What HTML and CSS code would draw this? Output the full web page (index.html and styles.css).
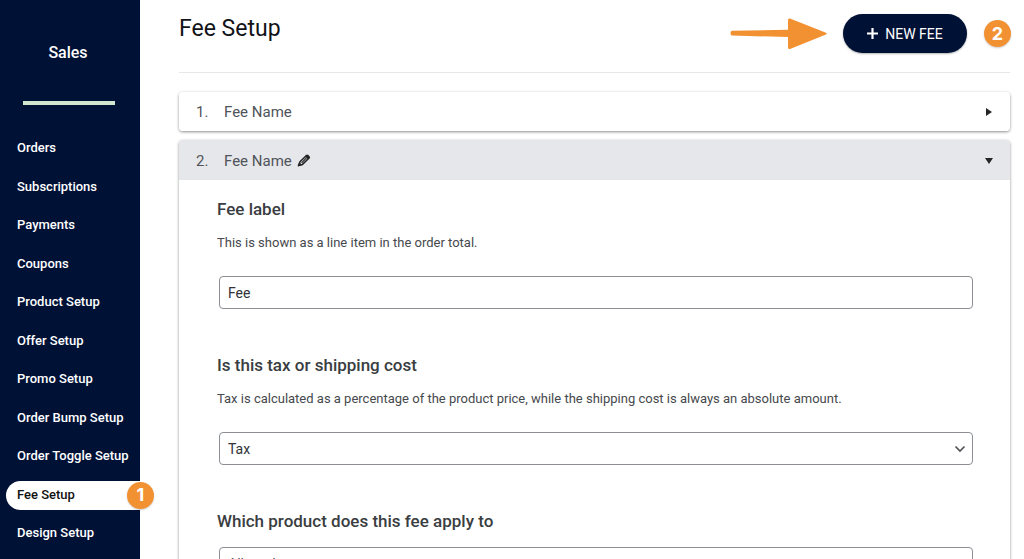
FILE: index.html
```html
<!DOCTYPE html>
<html lang="en">
<head>
<meta charset="utf-8">
<meta name="viewport" content="width=device-width, initial-scale=1">
<title>Fee Setup</title>
<link rel="stylesheet" href="styles.css">
</head>
<body>
<div class="app">
  <aside class="sidebar">
    <div class="sidebar-title">Sales</div>
    <div class="sidebar-rule"></div>
    <nav class="nav">
      <a href="#">Orders</a>
      <a href="#">Subscriptions</a>
      <a href="#">Payments</a>
      <a href="#">Coupons</a>
      <a href="#">Product Setup</a>
      <a href="#">Offer Setup</a>
      <a href="#">Promo Setup</a>
      <a href="#">Order Bump Setup</a>
      <a href="#">Order Toggle Setup</a>
      <a href="#" class="active" aria-current="page">Fee Setup<span class="badge badge-nav">1</span></a>
      <a href="#">Design Setup</a>
    </nav>
  </aside>
  <main class="main">
    <header class="header">
      <h1 class="title">Fee Setup</h1>
      <div class="actions">
        <svg class="arrow" width="98" height="34" viewBox="0 0 98 34" aria-hidden="true"><path d="M2 13.800 L58 12.800 L58 3 Q58 1 60 1.500 L96 15.800 Q97.500 16.600 96 17.400 L60 32 Q58 32.500 58 30.500 L58 20 L2 18.600 Q.5 18.300 .5 16.200 Q.5 14 2 13.800Z" fill="#f29132"/></svg>
        <button class="new-fee" type="button"><svg width="11" height="11" viewBox="0 0 11 11" aria-hidden="true"><path d="M5.500 0V11M0 5.500H11" stroke="#fff" stroke-width="2.200"/></svg>NEW FEE</button>
        <span class="badge">2</span>
      </div>
    </header>
    <section class="card">
      <button class="card-head" type="button" aria-expanded="false">
        <span class="num">1.</span><span>Fee Name</span>
        <svg class="caret" width="8" height="8" viewBox="0 0 8 8" aria-hidden="true"><path d="M1 0L7 4L1 8Z" fill="#262626"/></svg>
      </button>
    </section>
    <section class="card">
      <button class="card-head open" type="button" aria-expanded="true">
        <span class="num">2.</span><span>Fee Name</span>
        <svg class="pencil" width="14" height="14" viewBox="0 0 14 14" aria-hidden="true"><path d="M1.500 11.500L3 7.800L9.200 1.700Q10.100 .9 11 1.700L11.800 2.500Q12.600 3.400 11.800 4.300L5.500 10.400Z" fill="#e6e7ea" stroke="#262626" stroke-width="1.600" stroke-linejoin="round"/><path d="M8 2.500L9.800 .9L12.800 3.500L10.900 5.600ZM.8 12.500L2.300 8.200L5.200 11.100Z" fill="#262626"/><path d="M4.600 8.900L9.300 4.200" stroke="#262626" stroke-width="1.200"/></svg>
        <svg class="caret" width="8" height="8" viewBox="0 0 8 8" aria-hidden="true"><path d="M0 1H8L4 7Z" fill="#262626"/></svg>
      </button>
      <div class="card-body">
        <div class="field">
          <label for="fee-label">Fee label</label>
          <p class="hint">This is shown as a line item in the order total.</p>
          <input class="control" id="fee-label" type="text" value="Fee">
        </div>
        <div class="field">
          <label for="fee-type">Is this tax or shipping cost</label>
          <p class="hint">Tax is calculated as a percentage of the product price, while the shipping cost is always an absolute amount.</p>
          <div class="select">
            <select class="control" id="fee-type"><option>Tax</option><option>Shipping cost</option></select>
            <svg class="chevron" width="12" height="8" viewBox="0 0 12 8" aria-hidden="true"><path d="M1.500 1.500L6 6L10.500 1.500" fill="none" stroke="#505357" stroke-width="1.700"/></svg>
          </div>
        </div>
        <div class="field">
          <label for="fee-product">Which product does this fee apply to</label>
          <input class="control product" id="fee-product" type="text" placeholder="All products">
        </div>
      </div>
    </section>
  </main>
</div>
</body>
</html>
```
FILE: styles.css
```css
* { box-sizing: border-box; }
html { scrollbar-width: none; }
body {
  margin: 0;
  font: 13px/20px Roboto, "Liberation Sans", sans-serif;
  color: #3c4043;
  background: #fff;
}
.app { display: flex; min-height: 100vh; }

.sidebar {
  flex: 0 0 140px;
  padding: 43px 0 0 6px;
  background: #001136;
  color: #fff;
}
.sidebar-title {
  margin-right: 10px;
  text-align: center;
  font-size: 16px;
  font-weight: 500;
}
.sidebar-rule {
  height: 4px;
  margin: 38px 25px 29px 17px;
  background: #d3e7d0;
}
.nav {
  display: flex;
  flex-direction: column;
  justify-content: space-between;
  height: 414px;
}
.nav a {
  position: relative;
  padding: 4px 0 5px 11px;
  border-radius: 15px 0 0 15px;
  color: #fff;
  font-weight: 500;
  text-decoration: none;
  white-space: nowrap;
}
.nav .active { background: #fff; color: #111; }

.badge {
  display: flex;
  align-items: center;
  justify-content: center;
  width: 27px;
  height: 27px;
  border-radius: 50%;
  background: #f29132;
  box-shadow: 0 1px 2px rgba(0, 0, 0, .2);
  color: #fff;
  font-family: Inter, sans-serif;
  font-size: 18px;
  font-weight: 700;
}
.badge-nav { position: absolute; right: -14px; top: 1px; }

.main { flex: 1; min-width: 0; padding: 0 14px 24px 39px; }
.header {
  display: flex;
  align-items: flex-start;
  justify-content: space-between;
  height: 73px;
  margin-bottom: 19px;
  padding-top: 14px;
  border-bottom: 1px solid #e6e7e9;
}
.title {
  margin: 0;
  color: #111318;
  font-size: 23px;
  font-weight: 400;
  line-height: 30px;
}
.actions { display: flex; align-items: center; margin-right: -1px; }
.arrow { margin-right: 15px; }
.new-fee {
  display: flex;
  align-items: center;
  justify-content: center;
  gap: 7px;
  width: 124px;
  height: 39px;
  margin-right: 17px;
  border: 0;
  border-radius: 20px;
  background: #001136;
  box-shadow: 0 1px 2px rgba(0, 0, 0, .3);
  color: #fff;
  font: 400 14px/20px Roboto, sans-serif;
}

.card {
  margin-bottom: 9px;
  border-radius: 4px;
  background: #fff;
  box-shadow: 0 1px 3px rgba(0, 0, 0, .45);
}
.card-head {
  display: flex;
  align-items: center;
  width: 100%;
  height: 39px;
  padding: 1px 17px 0;
  border: 0;
  border-radius: 4px;
  background: #fff;
  color: #50545a;
  font: 400 15px/20px Roboto, sans-serif;
}
.card-head.open {
  height: 40px;
  border-radius: 4px 4px 0 0;
  background: #e6e7ea;
}
.num { width: 28px; text-align: left; }
.caret { margin-left: auto; }
.pencil { margin-left: 5px; }

.card-body { padding: 17px 37px 24px 38px; }
.field { margin-bottom: 44px; }
.field label {
  display: block;
  color: #3a3d41;
  font-size: 17px;
  font-weight: 500;
  line-height: 24px;
}
.hint { margin: 12px 0 23px; color: #46494d; }
.control {
  display: block;
  width: calc(100% - 2px);
  height: 33px;
  margin-left: 2px;
  padding: 0 8px;
  border: 1px solid #8c8f94;
  border-radius: 4px;
  background: #fff;
  color: #303338;
  font: 400 14px/20px Roboto, sans-serif;
}
.control::placeholder { color: #50545a; opacity: 1; }
.product { margin-top: 14px; }
.select { position: relative; }
.select .control { appearance: none; }
.chevron { position: absolute; right: 7px; top: 13px; pointer-events: none; }
```
